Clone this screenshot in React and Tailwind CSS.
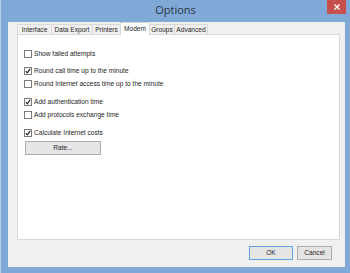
const options = [
  { label: "Show failed attempts", checked: false, gap: "mt-[15px]" },
  { label: "Round call time up to the minute", checked: true, gap: "mt-[9px]" },
  { label: "Round Internet access time up to the minute", checked: false, gap: "mt-[5px]" },
  { label: "Add authentication time", checked: true, gap: "mt-[10px]" },
  { label: "Add protocols exchange time", checked: false, gap: "mt-[5px]" },
  { label: "Calculate Internet costs", checked: true, gap: "mt-[10px]" },
];

const tabs = [
  { name: "Interface", w: "w-[35px]" },
  { name: "Data Export", w: "w-[42px]" },
  { name: "Printers", w: "w-[29px]" },
  { name: "Modem", w: "w-[30px]" },
  { name: "Groups", w: "w-[26px]" },
  { name: "Advanced", w: "w-[34px]" },
];

const Check = ({ checked }) => (
  <span className="w-[8px] h-[8px] border border-[#7a7a7a] bg-white flex items-center justify-center shrink-0">
    {checked && (
      <svg width="6" height="6" viewBox="0 0 6 6">
        <path d="M0.8 3.2 L2.3 4.8 L5.2 0.9" fill="none" stroke="#222" strokeWidth="1.2" />
      </svg>
    )}
  </span>
);

export default function App() {
  return (
    <div
      className="w-[350px] h-[273px] bg-[#80a9d7] border-l border-l-[#b4cde8] flex flex-col text-[#262626]"
      style={{ fontFamily: '"Liberation Sans", Arial, sans-serif' }}
    >
      <div className="h-[22px] relative flex items-center justify-center">
        <span className="text-[11px] text-[#2b3442] mt-[-1px]" style={{ fontFamily: '"Open Sans", sans-serif' }}>
          Options
        </span>
        <div className="absolute right-[4px] top-0 w-[19px] h-[14px] bg-[#c7504c] flex items-center justify-center">
          <svg width="6" height="6" viewBox="0 0 6 6">
            <path d="M0.5 0.5 L5.5 5.5 M5.5 0.5 L0.5 5.5" stroke="#fff" strokeWidth="1.4" />
          </svg>
        </div>
      </div>

      <div className="flex-1 ml-[7px] mr-[5px] mb-[6px] bg-[#f0f0f0] flex flex-col pl-[9px] pr-[3px]">
        <div className="flex items-end h-[13px] text-[6.6px] leading-none">
          {tabs.map((t, i) =>
            t.name === "Modem" ? (
              <div
                key={t.name}
                className={`h-[13px] bg-white border border-[#d9d9d9] border-b-0 flex items-center justify-center -ml-px relative z-10 ${t.w}`}
              >
                {t.name}
              </div>
            ) : (
              <div
                key={t.name}
                className={`h-[11px] bg-[#f0f0f0] border border-[#d9d9d9] border-b-0 flex items-center justify-center ${i > 0 ? "-ml-px" : ""} ${t.w}`}
              >
                {t.name}
              </div>
            )
          )}
        </div>
        <div className="h-[206px] w-[323px] bg-white border border-[#d9d9d9] -mt-px flex flex-col pl-[6px] text-[6.6px] leading-none">
          {options.map((o) => (
            <label key={o.label} className={`flex items-center gap-[2px] ${o.gap}`}>
              <Check checked={o.checked} />
              <span>{o.label}</span>
            </label>
          ))}
          <button className="mt-[4px] ml-[1px] w-[76px] h-[14px] bg-[#e6e6e6] border border-[#adadad] text-[6.6px] flex items-center justify-center">
            Rate...
          </button>
        </div>
        <div className="flex justify-end gap-[4px] mt-[6px] mr-[10px] text-[6.6px]">
          <button className="w-[44px] h-[14px] bg-[#e5e5e5] border border-[#5ea2e0] flex items-center justify-center">
            OK
          </button>
          <button className="w-[35px] h-[14px] bg-[#e5e5e5] border border-[#adadad] flex items-center justify-center">
            Cancel
          </button>
        </div>
      </div>
    </div>
  );
}
